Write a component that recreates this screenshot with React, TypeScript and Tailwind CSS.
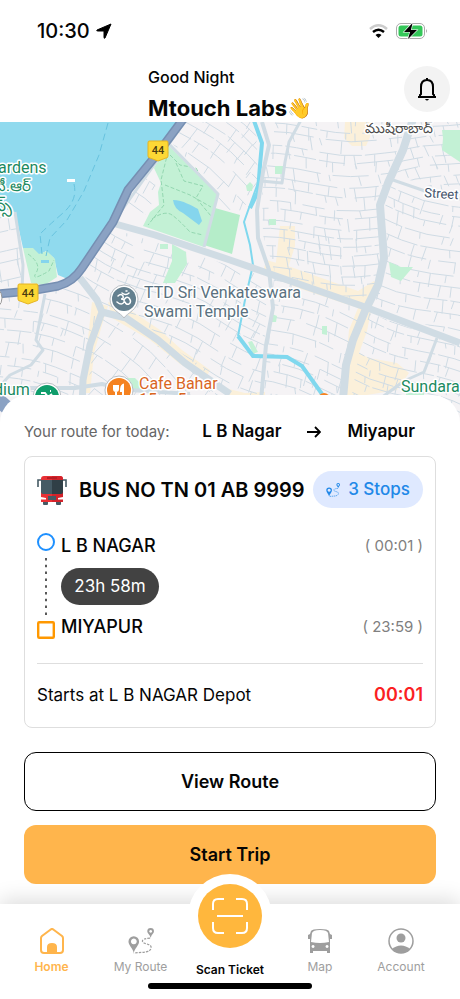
import React from "react";

type Point = [number, number];

type Zone = {
  id: string;
  area: string;
  center: Point;
  radius: number;
  angle: number;
  step: number;
  seed: number;
};

const zones: Zone[] = [
  { id: "north", area: "275,122 408,122 378,200 380,300 365,303 275,272 263,235 262,180 272,150", center: [325, 210], radius: 115, angle: 2, step: 13, seed: 7 },
  { id: "northeast", area: "414,122 460,122 460,195 396,176", center: [435, 160], radius: 50, angle: -12, step: 12, seed: 12 },
  { id: "east", area: "392,184 460,205 460,338 371,303 387,270 384,210", center: [425, 255], radius: 90, angle: 16, step: 13, seed: 21 },
  { id: "southeast", area: "366,312 460,346 460,430 346,430", center: [405, 370], radius: 80, angle: 20, step: 12, seed: 34 },
  { id: "south", area: "274,278 362,310 340,400 262,400 270,320", center: [315, 345], radius: 80, angle: 17, step: 13, seed: 43 },
  { id: "center", area: "110,228 228,265 268,278 262,400 225,388 140,320 104,306 84,275", center: [185, 315], radius: 115, angle: 24, step: 14, seed: 55 },
  { id: "centersouth", area: "104,315 150,340 228,397 228,430 84,430 92,350", center: [150, 370], radius: 85, angle: 40, step: 18, seed: 62 },
  { id: "west", area: "0,298 60,290 80,284 98,312 82,400 0,410", center: [45, 350], radius: 75, angle: 14, step: 14, seed: 74 },
  { id: "westshore", area: "0,215 14,215 24,284 0,288", center: [10, 250], radius: 45, angle: -4, step: 18, seed: 85 },
  { id: "upper", area: "184,122 256,122 258,185 240,214 218,206 219,192 172,143", center: [220, 160], radius: 62, angle: 38, step: 14, seed: 93 },
  { id: "shore", area: "126,202 154,170 156,196 140,224 116,218", center: [135, 200], radius: 35, angle: 35, step: 20, seed: 99 },
];

function streets(zone: Zone): string {
  let state = zone.seed * 7919;
  const random = () => {
    state = (state * 1103515245 + 12345) % 2147483648;
    return state / 2147483648;
  };
  const turn = (zone.angle * Math.PI) / 180;
  const place = (u: number, v: number) => {
    const bend = Math.sin(u / 24 + zone.seed) * 4;
    const x = zone.center[0] + u * Math.cos(turn) - (v + bend) * Math.sin(turn);
    const y = zone.center[1] + u * Math.sin(turn) + (v + bend) * Math.cos(turn);
    return `${x.toFixed(1)} ${y.toFixed(1)}`;
  };
  const parts: string[] = [];
  for (let row = -zone.radius; row < zone.radius; row += zone.step * (0.6 + random() * 0.5)) {
    let u = -zone.radius;
    while (u < zone.radius) {
      const length = 14 + random() * 40;
      parts.push(`M${place(u, row)}L${place(u + length / 2, row)}L${place(u + length, row)}`);
      u += length + (random() > 0.5 ? 12 : 3);
    }
    for (let k = -zone.radius; k < zone.radius; k += zone.step * (0.7 + random() * 1.6)) {
      const height = zone.step * (0.4 + random() * 0.7);
      parts.push(`M${place(k, row)}L${place(k + random() * 4 - 1, row + height)}`);
    }
  }
  return parts.join("");
}

function Shield({ x, y }: { x: number; y: number }) {
  return (
    <g>
      <path d={`M${x - 9} ${y - 9}h18q1 0 1 2v13q0 2-2 2l-8 3l-8-3q-2 0-2-2v-13q0-2 1-2z`} fill="#fdd835" stroke="#e6b422" />
      <text x={x} y={y + 4} textAnchor="middle" fontSize="11" fontWeight="500" fill="#4a3d10">44</text>
    </g>
  );
}

function Pin({ x, y, color, children }: { x: number; y: number; color: string; children: React.ReactNode }) {
  return (
    <g transform={`translate(${x} ${y})`}>
      <path d="M0 19C-3 14-14 11-14 0A14 14 0 0 1 14 0C14 11 3 14 0 19Z" fill="#fff" stroke="#b9bec3" strokeWidth="1" />
      <circle r="12" fill={color} />
      {children}
    </g>
  );
}

function CityMap() {
  return (
    <svg
      className="block h-[308px] w-full font-['Roboto','Noto_Sans',sans-serif]"
      viewBox="0 122 460 308"
      preserveAspectRatio="xMidYMin slice"
      role="img"
      aria-label="City map"
    >
      <rect y="122" width="460" height="308" fill="#f5f3f5" />
      <g fill="#fbf0da">
        <path d="M345 122h25v15l-4 9h-14l-8-8zM280 226h15v20l-8 25h-12z" />
        <path d="M266 260l22 6l70 25l16-10l5 5l-7 20l-5 25l-8 22l10 5l28 5l12 10l-12 17l-30 5h-24l6-65l9-22l-60-20l-35-15zM92 302l16 4l-4 12l-10 35l-4 40h-10l7-45zM108 302l22 8l30 20l22 20l28 20l-4 8l-26-14l-30-24l-38-22z" />
        <path d="M225 388l20 5l20-1v12h-40z" />
      </g>
      <g fill="none" stroke="#cfdbe4" strokeWidth="1">
        {zones.map((zone) => (
          <g key={zone.id}>
            <clipPath id={zone.id}>
              <polygon points={zone.area} />
            </clipPath>
            <path clipPath={`url(#${zone.id})`} d={streets(zone)} />
          </g>
        ))}
      </g>
      <path d="M0 122H182L158 152L128 190L113 222L86 260L70 280L58 275L54 258L46 251L38 256L23 248L15 212L0 208Z" fill="#90daee" />
      <g fill="#c3f1d5">
        <path d="M23 248l10 0l6 6l8-3l8 8l2 18l-12 8l-14-2z" />
        <path d="M168 145L218 194L204 247L143 226L150 212L159 205L158 192L161 183L154 168Z" />
        <path d="M215 208L240 215L232 254L204 245Z" fill="#b5edc9" />
        <path d="M160 244h8v5h-8zM172 244l14 8l1 12l-12 19l-12 0l9-22z" />
        <path d="M275 166h8v8h-8zM269 219h7v6h-7zM246 186l4-4l3 3l-1 6h-5zM442 130l18 0v32l-18-12l1-12zM389 262l12 5l12 0l-12 14l-10-4zM272 314l5 2l-1 6h-5zM322 326l5 0v9l-5-1zM248 342l4-1l6 11l-5 2z" />
        <path d="M127 378h8l5 5v6h-12zM406 393h18v5h-18z" />
      </g>
      <path d="M173 200C183 200 192 206 198 209L202 221L199 225L183 213Q174 209 173 200ZM41 260h8v3h-8z" fill="#85d5ed" />
      <g fill="none" stroke="#93d7b0" strokeWidth="1" strokeDasharray="4 2">
        <path d="M168 152L161 180L164 205L148 225M170 155L180 165L196 168L203 180L213 190M165 185L190 195L211 207M152 219Q165 210 172 215T190 232L203 235M176 163L184 181L203 186L196 198L211 216" />
        <path d="M28 254Q42 264 36 273T49 271L54 260" />
      </g>
      <g fill="none" stroke="#68c3df" strokeWidth="1" strokeDasharray="7 4">
        <path d="M108 123L99 155L84 191L67 220L50 238L46 256M74 184Q78 200 63 213T40 234L42 254" />
      </g>
      <rect x="67" y="179" width="8" height="3" fill="#fff" />
      <path d="M253 118L262 145L259 180L250 205L244 222L250 245L253 265L245 300L238 336" fill="none" stroke="#80d8ee" strokeWidth="2" />
      <path d="M253 118L262 143L260 165L258 192L250 208M238 336L253 356L287 357L302 366L322 394" fill="none" stroke="#80d8ee" strokeWidth="4" />
      <g fill="none" stroke="#d0dce4" strokeLinejoin="round">
        <path d="M262 122L269 145L263 172L257 210L258 238L269 270L273 308L266 345L261 400" strokeWidth="4" />
        <path d="M301 120L289 142L285 162L282 183L261 181M393 180L425 191L460 199M170 145L218 194L204 247M15 212L23 265L22 292M45 294L36 340L43 350L31 365L10 375L0 386M186 120L112 224L84 264M437 338L424 372L404 381L381 398" strokeWidth="3" />
        <path d="M112 223L155 235L230 260L365 307L460 343M80 278L97 300L102 312L90 345L83 380L82 410M102 312L126 318L158 340L185 363L230 394" strokeWidth="7" />
        <path d="M414 116L403 150L388 183L380 205L384 258L378 285L365 311L353 340L346 365L342 410" strokeWidth="8" />
        <path d="M0 388L75 388L102 384L130 390L190 394" strokeWidth="4" />
      </g>
      <path d="M184 118L158 153L128 190L113 222L82 268Q73 282 58 286L30 291L-4 294" fill="none" stroke="#768fb2" strokeWidth="9" />
      <path d="M184 118L158 153L128 190L113 222L82 268Q73 282 58 286L30 291L-4 294" fill="none" stroke="#8ba2c3" strokeWidth="6" />
      <path d="M-5 397L12 412" stroke="#8ba2c3" strokeWidth="14" />
      <Shield x={158} y={150} />
      <Shield x={28} y={293} />
      <circle cx="-10" cy="298" r="12" fill="#fff" stroke="#999" />
      <Pin x={124} y={299} color="#64808f">
        <path d="M-6-3Q-3-6-1-3Q0 0-3 0Q1 0 0 3Q-2 7-7 3M0 1Q2-3 5-1Q8 3 5 5Q2 6 1 3M-2-6Q2-3 5-6M2-8h1" fill="none" stroke="#fff" strokeWidth="1.500" strokeLinecap="round" />
      </Pin>
      <Pin x={119} y={390} color="#f58220">
        <path d="M-5-5v4q0 2 2 2v5M-3-5v5M-1-5v4q0 2-2 2M4 6v-11q-2 1-2 6h2" fill="none" stroke="#fff" strokeWidth="2" />
      </Pin>
      <Pin x={47} y={397} color="#0f9d6b">
        <path d="M-6-4h4l3 4l4-3M3-6h1M-3 2h5" fill="none" stroke="#fff" strokeWidth="2" />
      </Pin>
      <circle cx="324" cy="399" r="6" fill="#f58220" />
      <g fontSize="16" stroke="#fff" strokeWidth="3" paintOrder="stroke" strokeLinejoin="round">
        <g fill="#1b8a5f">
          <text x="-2" y="173">ardens</text>
          <text x="-6" y="191" fontSize="15">టీ.ఆర్</text>
          <text x="-6" y="211" fontSize="17">న్స్</text>
          <text x="-6" y="395">dium</text>
          <text x="401" y="392">Sundara</text>
        </g>
        <g fill="#5a7180" fontSize="16">
          <text x="144" y="298">TTD Sri Venkateswara</text>
          <text x="144" y="317">Swami Temple</text>
        </g>
        <g fill="#d9661f">
          <text x="139" y="405">15 ... 5 ...</text>
          <text x="139" y="389">Cafe Bahar</text>
        </g>
        <text x="365" y="133" fontSize="14" fill="#4b4b4b">ముషీరాబాద్</text>
        <text x="424" y="197" fontSize="13" fill="#43526a" transform="rotate(4 424 197)">Street</text>
      </g>
    </svg>
  );
}

function StatusBar() {
  return (
    <div className="flex h-[62px] items-center justify-between pr-8 pl-[37px]">
      <div className="flex items-center gap-1.5">
        <span className="text-xl font-medium">10:30</span>
        <svg className="size-4" viewBox="0 0 16 16" aria-hidden="true">
          <path d="M15 1L9 15Q8 16 8 14V8H2Q0 8 1 7Z" stroke="#000" strokeLinejoin="round" />
        </svg>
      </div>
      <div className="flex items-center gap-2">
        <svg className="h-4 w-[19px]" viewBox="0 0 19 16" fill="none" aria-hidden="true">
          <path d="M1 6Q9.500-1.500 18 6" stroke="#ccc" strokeWidth="2.500" />
          <path d="M4 9Q9.500 4.500 15 9" stroke="#000" strokeWidth="2.500" />
          <path d="M6.500 12Q9.500 9.500 12.500 12L9.500 15Z" fill="#000" />
        </svg>
        <svg className="h-4 w-8" viewBox="0 0 32 16" aria-hidden="true">
          <rect x=".5" y=".5" width="28" height="15" rx="4.500" fill="none" stroke="#aaa" />
          <rect x="2.500" y="2.500" width="24" height="11" rx="2.500" fill="#34c759" />
          <path d="M30 6q2 2 0 4z" fill="#aaa" />
          <path d="M16.500 0L8 9h6l-2 7l9-9h-6z" stroke="#fff" strokeWidth="1.200" paintOrder="stroke" />
        </svg>
      </div>
    </div>
  );
}

function RouteIcon({ className }: { className: string }) {
  return (
    <svg className={className} viewBox="0 0 27 27" fill="currentColor" aria-hidden="true">
      <path fillRule="evenodd" d="M6 26C5 21 .5 18 .5 14A5.500 5.500 0 0 1 11.500 14C11.500 18 7 21 6 26ZM6 11a3 3 0 1 0 .1 0ZM23.500 10C22.500 7 20 5.500 20 3.500A3.500 3.500 0 0 1 27 3.500C27 5.500 24.500 7 23.500 10ZM23.500 2a1.500 1.500 0 1 0 .1 0Z" />
      <path d="M23 10.500Q15 11 15 13.500C15 17 24 16 24 20C24 26 15 25 6 26" fill="none" stroke="currentColor" strokeWidth="1.300" strokeDasharray="2.500 1.200" />
    </svg>
  );
}

function RedBus() {
  return (
    <svg className="size-[30px] shrink-0" viewBox="0 0 30 30" aria-hidden="true">
      <path d="M1 12V5h4M29 12V5h-4" fill="none" stroke="#455a64" strokeWidth="1.600" />
      <path d="M6 25h5v4q0 1-1 1H7q-1 0-1-1zM19 25h5v4q0 1-1 1h-3q-1 0-1-1z" fill="#455a64" />
      <path d="M4 4Q4 1 7 1H23Q26 1 26 4V27H4Z" fill="#e83035" />
      <path d="M15 1h8q3 0 3 3v23H15z" fill="#d3222a" />
      <path d="M4 5H15V19H6Q4 19 4 17Z" fill="#455a64" />
      <path d="M15 5H26V17Q26 19 24 19H15Z" fill="#303f46" />
      <path d="M10 2h10v2H10z" fill="#b71c24" />
      <path d="M4 22l5 1v1.500H4zM26 22l-5 1v1.500h5z" fill="#fff" />
      <path d="M11 21h8v4h-8z" fill="#455a64" />
    </svg>
  );
}

function Stop({ name, time }: { name: string; time: string }) {
  return (
    <div className="flex h-6 items-center justify-between">
      <span className="text-lg font-medium">{name}</span>
      <span className="text-[15px] text-[#808080]">( {time} )</span>
    </div>
  );
}

function RouteCard() {
  return (
    <section className="rounded-lg border border-[#dedede] px-3">
      <div className="flex items-center justify-between pt-[14px]">
        <div className="flex items-center gap-3">
          <RedBus />
          <h2 className="text-xl font-semibold whitespace-nowrap">BUS NO TN 01 AB 9999</h2>
        </div>
        <button type="button" className="flex h-[37px] w-[110px] items-center justify-center gap-2 rounded-full bg-[#dfe9ff] font-medium whitespace-nowrap text-[#2188e8]">
          <RouteIcon className="size-[14px]" />
          <span className="text-[17px]">3 Stops</span>
        </button>
      </div>

      <div className="mt-6 flex gap-1.5 pb-[23px]">
        <svg className="h-[108px] w-[18px] shrink-0" viewBox="0 0 18 108" fill="none" aria-hidden="true">
          <circle cx="9" cy="10" r="8" stroke="#1e90ff" strokeWidth="2" />
          <path d="M9 26V84" stroke="#000" strokeWidth="1.300" strokeDasharray="2.500 4.300" />
          <rect x="1.200" y="90.200" width="15.600" height="15.600" rx="1" stroke="#ff9800" strokeWidth="2.400" />
        </svg>
        <div className="flex-1 pt-0.5">
          <Stop name="L B NAGAR" time="00:01" />
          <div className="my-2.5 flex h-[37px] w-[98px] items-center justify-center rounded-full bg-[#424242] text-[17px] text-white">23h 58m</div>
          <Stop name="MIYAPUR" time="23:59" />
        </div>
      </div>

      <div className="flex items-center justify-between border-t border-[#dedede] pt-[19px] pb-5">
        <span className="text-[17px] leading-6">Starts at L B NAGAR Depot</span>
        <span className="text-lg leading-6 font-semibold text-[#fb1f24]">00:01</span>
      </div>
    </section>
  );
}

function NavItem({ label, active, children }: { label: string; active?: boolean; children: React.ReactNode }) {
  return (
    <button type="button" className={active ? "flex flex-col items-center gap-1 pt-6 font-semibold text-[#ffb54c]" : "flex flex-col items-center gap-1 pt-6 text-[#9e9e9e]"}>
      {children}
      <span className="text-xs leading-[18px] whitespace-nowrap">{label}</span>
    </button>
  );
}

function BottomNav() {
  return (
    <nav className="relative bg-white shadow-[0_-4px_20px_rgba(0,0,0,0.14)]">
      <div className="grid grid-cols-[89fr_89fr_90fr_90fr_72fr] items-start pr-[23px] pl-[7px]">
        <NavItem label="Home" active>
          <svg className="size-[26px]" viewBox="0 0 26 26" fill="none" aria-hidden="true">
            <path d="M2 10Q2 9 3 8L11 2Q13 0 15 2L23 8Q24 9 24 10V22Q24 25 21 25H5Q2 25 2 22Z" stroke="currentColor" strokeWidth="2" />
            <path d="M8 25V19Q8 15 13 15T18 19V25Z" fill="currentColor" />
          </svg>
        </NavItem>
        <NavItem label="My Route">
          <RouteIcon className="size-[26px]" />
        </NavItem>
        <button type="button" className="-mt-[30px] flex flex-col items-center gap-1">
          <span className="flex size-[84px] items-center justify-center rounded-full bg-white">
            <span className="flex size-16 items-center justify-center rounded-full bg-[#ffb73d]">
              <svg className="size-9" viewBox="0 0 36 36" fill="none" stroke="#fff" strokeWidth="2" aria-hidden="true">
                <path d="M1 12V6Q1 1 6 1H12M24 1H30Q35 1 35 6V12M35 24V30Q35 35 30 35H24M12 35H6Q1 35 1 30V24M5 18H31" />
              </svg>
            </span>
          </span>
          <span className="text-xs leading-4 font-semibold whitespace-nowrap">Scan Ticket</span>
        </button>
        <NavItem label="Map">
          <svg className="size-[26px]" viewBox="0 0 26 26" fill="currentColor" aria-hidden="true">
            <path fillRule="evenodd" d="M4 3Q5 1 13 1T22 3L23 6L25 7V11H23V25H20V23H6V25H3V11H1V7L3 6ZM5 5L4 14Q13 16 22 14L21 5Q20 2 13 2T5 5ZM6 17a1.500 1.500 0 1 0 .1 0ZM20 17a1.500 1.500 0 1 0 .1 0Z" />
          </svg>
        </NavItem>
        <NavItem label="Account">
          <svg className="size-[26px]" viewBox="0 0 26 26" fill="none" aria-hidden="true">
            <circle cx="13" cy="13" r="12" stroke="currentColor" strokeWidth="1.500" />
            <circle cx="13" cy="10" r="4.500" fill="currentColor" />
            <path d="M4 21Q8 17.500 13 17.500T22 21Q18 25 13 25T4 21Z" fill="currentColor" />
          </svg>
        </NavItem>
      </div>
      <div className="flex justify-center pt-[5px] pb-2.5">
        <span className="h-1.5 w-[164px] rounded-full bg-black" />
      </div>
    </nav>
  );
}

export default function App() {
  return (
    <div className="flex min-h-screen flex-col bg-white font-['Inter','Noto_Sans',sans-serif] text-[#050505]">
      <StatusBar />
      <header className="flex items-start justify-end pr-2.5 pb-0.5">
        <div className="flex w-[256px] flex-col">
          <p className="pt-[3px] text-base leading-6 font-medium">Good Night</p>
          <h1 className="flex items-center pt-[7px] text-[22px] leading-6 font-bold whitespace-nowrap">
            Mtouch Labs<span className="text-xl leading-6">👋</span>
          </h1>
        </div>
        <button type="button" aria-label="Notifications" className="mt-1 flex size-[46px] items-center justify-center rounded-full bg-[#f3f3f3]">
          <svg className="size-6" viewBox="0 0 24 24" aria-hidden="true">
            <path d="M12 3V1M3 20H21M5 20V18L6 17V10Q6 3 12 3T18 10V17L19 18V20" fill="none" stroke="#000" strokeWidth="2" />
            <path d="M10 22h4q-2 3-4 0z" />
          </svg>
        </button>
      </header>
      <CityMap />
      <main className="relative -mt-[35px] flex-1 rounded-t-[28px] bg-white px-6 pt-[25px] pb-5">
        <div className="mb-3 flex h-6 items-center justify-between pr-[21px]">
          <span className="text-[15px] whitespace-nowrap text-[#666]">Your route for today:</span>
          <div className="flex items-center gap-[26px] text-[17px] font-semibold whitespace-nowrap">
            <span>L B Nagar</span>
            <svg className="h-3 w-[14px]" viewBox="0 0 14 12" fill="none" stroke="#000" strokeWidth="1.800" aria-label="to">
              <path d="M0 6H12M8 1L13 6L8 11" />
            </svg>
            <span>Miyapur</span>
          </div>
        </div>
        <RouteCard />
        <div className="mt-6 flex flex-col gap-[14px]">
          <button type="button" className="h-[59px] rounded-xl border border-black text-lg font-semibold">View Route</button>
          <button type="button" className="h-[59px] rounded-xl bg-[#ffb54c] text-lg font-semibold">Start Trip</button>
        </div>
      </main>
      <BottomNav />
    </div>
  );
}
